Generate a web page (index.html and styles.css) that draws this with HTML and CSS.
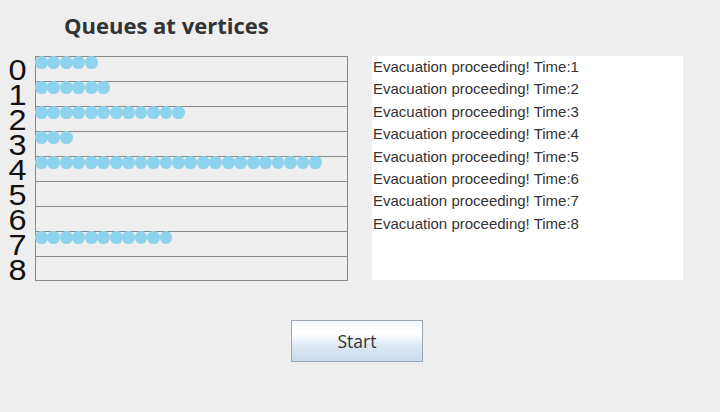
FILE: index.html
```html
<!DOCTYPE html>
<html>
<head>
<meta charset="utf-8">
<link rel="stylesheet" href="styles.css">
</head>
<body>
<div class="app">
  <h1 class="title">Queues at vertices</h1>
  <div class="main">
    <div class="labels">
      <div>0</div><div>1</div><div>2</div><div>3</div><div>4</div><div>5</div><div>6</div><div>7</div><div>8</div>
    </div>
    <div class="grid">
      <div class="row"><div class="dots"><i></i><i></i><i></i><i></i><i></i></div></div>
      <div class="row"><div class="dots"><i></i><i></i><i></i><i></i><i></i><i></i></div></div>
      <div class="row"><div class="dots"><i></i><i></i><i></i><i></i><i></i><i></i><i></i><i></i><i></i><i></i><i></i><i></i></div></div>
      <div class="row"><div class="dots"><i></i><i></i><i></i></div></div>
      <div class="row"><div class="dots"><i></i><i></i><i></i><i></i><i></i><i></i><i></i><i></i><i></i><i></i><i></i><i></i><i></i><i></i><i></i><i></i><i></i><i></i><i></i><i></i><i></i><i></i><i></i></div></div>
      <div class="row"><div class="dots"></div></div>
      <div class="row"><div class="dots"></div></div>
      <div class="row"><div class="dots"><i></i><i></i><i></i><i></i><i></i><i></i><i></i><i></i><i></i><i></i><i></i></div></div>
      <div class="row"><div class="dots"></div></div>
    </div>
    <div class="log">
      <div>Evacuation proceeding! Time:1</div>
      <div>Evacuation proceeding! Time:2</div>
      <div>Evacuation proceeding! Time:3</div>
      <div>Evacuation proceeding! Time:4</div>
      <div>Evacuation proceeding! Time:5</div>
      <div>Evacuation proceeding! Time:6</div>
      <div>Evacuation proceeding! Time:7</div>
      <div>Evacuation proceeding! Time:8</div>
    </div>
  </div>
  <div class="actions">
    <button class="start">Start</button>
  </div>
</div>
</body>
</html>
```

FILE: styles.css
```css
html, body {
  margin: 0;
  padding: 0;
  background: #eeeeee;
}
.app {
  width: 720px;
  height: 412px;
  display: flex;
  flex-direction: column;
}
.title {
  margin: 10px 0 0 64px;
  font-family: "Open Sans", sans-serif;
  font-weight: 700;
  font-size: 22px;
  line-height: 30px;
  color: #333333;
  height: 30px;
}
.main {
  display: flex;
  margin-top: 16px;
  height: 226px;
}
.labels {
  width: 35px;
  padding-top: 2px;
  font-family: "Liberation Sans", Arial, sans-serif;
  font-size: 29px;
  line-height: 25px;
  color: #111111;
  text-align: center;
  box-sizing: border-box;
}
.labels div {
  height: 25px;
  transform: scaleX(1.12);
}
.grid {
  width: 311px;
  height: 224px;
  border: 1px solid #8a8a8a;
  border-top: none;
}
.row {
  height: 24px;
  border-top: 1px solid #8a8a8a;
}
.dots {
  display: flex;
  margin-top: -1px;
  margin-left: -1px;
}
.dots i {
  display: block;
  flex: none;
  width: 12.8px;
  height: 12.8px;
  margin-right: -0.35px;
  border-radius: 50%;
  background: #8ed3ee;
}
.log {
  margin-left: 24px;
  width: 311px;
  height: 224px;
  background: #ffffff;
  font-family: "Liberation Sans", Arial, sans-serif;
  font-size: 15px;
  line-height: 22.4px;
  color: #333333;
  padding-left: 1px;
  padding-top: 0;
  box-sizing: border-box;
}
.actions {
  margin-top: 38px;
  padding-left: 291px;
}
.start {
  width: 132px;
  height: 42px;
  border: 1px solid #9aa6b2;
  background: linear-gradient(to bottom, #f4f8fc 0%, #ffffff 30%, #dfe9f4 60%, #c8daec 100%);
  font-family: "Open Sans", sans-serif;
  font-size: 17.5px;
  color: #333333;
  padding: 0;
  margin: 0;
}
```
